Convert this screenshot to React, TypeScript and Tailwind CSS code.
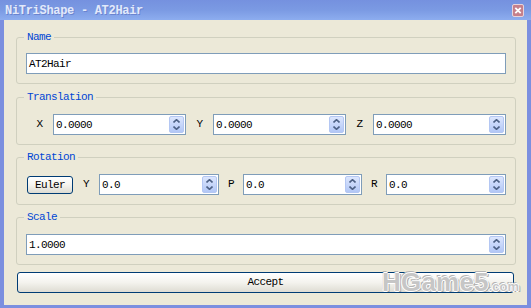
import React from 'react';

const mono = "font-['Liberation_Mono',monospace] text-[11px] tracking-[-0.6px]";

function Spinner() {
    return (
        <div className="w-[15px] h-[17px] shrink-0 rounded-[2px] border border-[#b4c7f3] bg-linear-to-b from-[#dce6fd] to-[#b2c7f6] flex flex-col items-center justify-center gap-[3px]">
            <svg width="7" height="4" viewBox="0 0 7 4">
                <path d="M0.5 3.5 L3.5 0.7 L6.5 3.5" stroke="#4d6185" strokeWidth="1.6" fill="none" />
            </svg>
            <svg width="7" height="4" viewBox="0 0 7 4">
                <path d="M0.5 0.5 L3.5 3.3 L6.5 0.5" stroke="#4d6185" strokeWidth="1.6" fill="none" />
            </svg>
        </div>
    );
}

function Field({ value, width, spin = true }: { value: string; width: string; spin?: boolean }) {
    return (
        <div className={`${width} h-[21px] shrink-0 border border-[#7f9db9] bg-white flex items-center pl-[2px] pr-[1px]`}>
            <span className={`flex-1 ${mono} text-black leading-[14px]`}>{value}</span>
            {spin && <Spinner />}
        </div>
    );
}

function Label({ text, width }: { text: string; width: string }) {
    return <span className={`${width} shrink-0 text-center ${mono} text-black`}>{text}</span>;
}

function Group({ title, className, children }: { title: string; className: string; children: React.ReactNode }) {
    return (
        <fieldset className={`ml-[12px] w-[500px] border border-[#d0d0bf] rounded-[3px] pl-[7px] pr-[9px] pb-[9px] ${className}`}>
            <legend className={`px-[3px] leading-[14px] ${mono} text-[#0046d5]`}>{title}</legend>
            {children}
        </fieldset>
    );
}

export default function App() {
    return (
        <div className="relative w-[531px] h-[308px] bg-[#7b8fdf] flex flex-col overflow-hidden">
            <div className="h-[20px] shrink-0 bg-linear-to-b from-[#7591df] via-[#7b9ae3] to-[#8dadef] flex items-center pl-[5px] pr-[7px] pt-[2px]">
                <span className="flex-1 font-['Liberation_Mono',monospace] text-[12px] font-bold tracking-[-0.3px] text-[#e2e9fb] [text-shadow:1px_1px_0_#6a84cf]">
                    NiTriShape - AT2Hair
                </span>
                <svg width="12" height="13" viewBox="0 0 12 13" className="-mt-[2px]">
                    <rect x="0.5" y="0.5" width="11" height="12" rx="1.5" fill="#c57f8b" stroke="#e8d3da" />
                    <path d="M3.3 3.8 L8.7 9.2 M8.7 3.8 L3.3 9.2" stroke="#fff" strokeWidth="1.8" />
                </svg>
            </div>
            <div className="flex-1 flex px-[4px] pb-[3px]">
                <div className="flex-1 bg-[#ece9d8] flex flex-col">
                    <Group title="Name" className="mt-[10px]">
                        <div className="pl-[2px] pt-[9px]">
                            <Field value="AT2Hair" width="w-[480px]" spin={false} />
                        </div>
                    </Group>

                    <Group title="Translation" className="mt-[6px]">
                        <div className="pl-[2px] pt-[10px] flex items-center">
                            <Label text="X" width="w-[27px]" />
                            <Field value="0.0000" width="w-[133px]" />
                            <Label text="Y" width="w-[27px]" />
                            <Field value="0.0000" width="w-[133px]" />
                            <Label text="Z" width="w-[27px]" />
                            <Field value="0.0000" width="w-[133px]" />
                        </div>
                    </Group>

                    <Group title="Rotation" className="mt-[5px]">
                        <div className="pl-[2px] pt-[10px] flex items-center">
                            <button className={`ml-[1px] w-[46px] h-[18px] shrink-0 rounded-[3px] border border-[#003c74] bg-linear-to-b from-white via-[#f5f4ee] to-[#dcdbd2] ${mono} text-black leading-[14px]`}>
                                Euler
                            </button>
                            <Label text="Y" width="w-[26px]" />
                            <Field value="0.0" width="w-[120px]" />
                            <Label text="P" width="w-[24px]" />
                            <Field value="0.0" width="w-[119px]" />
                            <Label text="R" width="w-[24px]" />
                            <Field value="0.0" width="w-[120px]" />
                        </div>
                    </Group>

                    <Group title="Scale" className="mt-[5px]">
                        <div className="pl-[2px] pt-[10px]">
                            <Field value="1.0000" width="w-[480px]" />
                        </div>
                    </Group>

                    <button className={`mt-[7px] ml-[13px] w-[497px] h-[21px] rounded-[3px] border border-[#003c74] bg-linear-to-b from-white via-[#f4f3ee] to-[#dedcd3] ${mono} text-black`}>
                        Accept
                    </button>
                </div>
            </div>

            <div className="absolute left-[382px] top-[271px] flex items-baseline whitespace-nowrap font-['Liberation_Sans',sans-serif] font-bold text-[#c6c6c6] [text-shadow:1px_0_0_#fff,-1px_0_0_#fff,0_1px_0_#fff,0_-1px_0_#fff,2px_1px_0_#a9a9a9,-1px_-2px_0_#b5b5b5]">
                <span className="text-[26px] leading-[23px] tracking-[0.2px]">HGame5</span>
                <span className="text-[13px] leading-[12px]">.com</span>
            </div>
        </div>
    );
}
